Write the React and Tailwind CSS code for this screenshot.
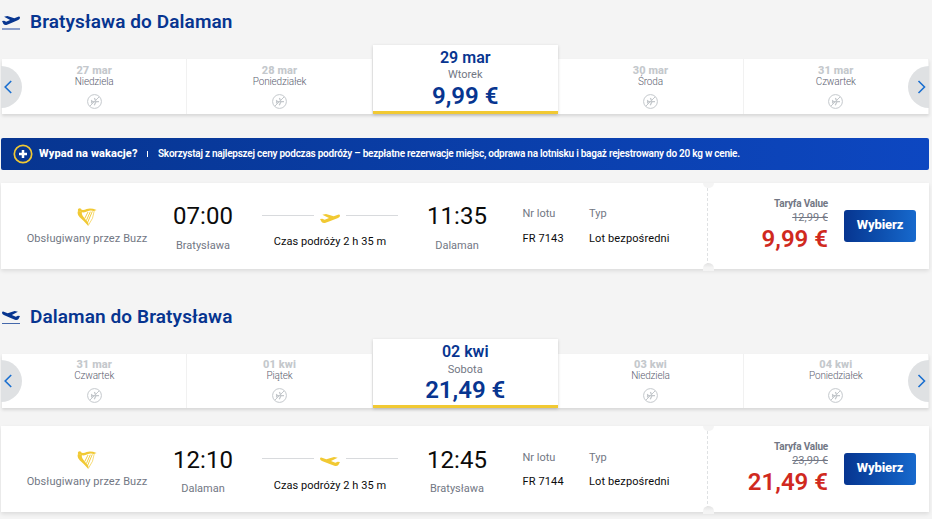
import classNames from "clsx";

const flights = [
	{
		direction: "takeoff",
		title: "Bratysława do Dalaman",
		days: [
			{ date: "27 mar", day: "Niedziela" },
			{ date: "28 mar", day: "Poniedziałek" },
			{ date: "29 mar", day: "Wtorek", price: "9,99 €" },
			{ date: "30 mar", day: "Środa" },
			{ date: "31 mar", day: "Czwartek" },
		],
		departure: { time: "07:00", city: "Bratysława" },
		arrival: { time: "11:35", city: "Dalaman" },
		number: "FR 7143",
		oldPrice: "12,99 €",
		price: "9,99 €",
	},
	{
		direction: "landing",
		title: "Dalaman do Bratysława",
		days: [
			{ date: "31 mar", day: "Czwartek" },
			{ date: "01 kwi", day: "Piątek" },
			{ date: "02 kwi", day: "Sobota", price: "21,49 €" },
			{ date: "03 kwi", day: "Niedziela" },
			{ date: "04 kwi", day: "Poniedziałek" },
		],
		departure: { time: "12:10", city: "Dalaman" },
		arrival: { time: "12:45", city: "Bratysława" },
		number: "FR 7144",
		oldPrice: "23,99 €",
		price: "21,49 €",
	},
];

function Plane({ direction, className }) {
	return (
		<svg
			viewBox="0 0 60 27"
			preserveAspectRatio="none"
			fill="currentColor"
			className={classNames(className, direction === "landing" && "-scale-x-100")}
		>
			<path d="M0 15 L7 14 L14 17 L27 12 L7 2 L18 0 L41 7 L54 2 Q60 1 60 5 Q60 9 54 12 L31 21 L17 26 Q9 28 5 24 Z" />
		</svg>
	);
}

function Harp() {
	return (
		<svg viewBox="0 0 60 54" className="w-5 h-[18px] text-[#f1c933]" fill="none" stroke="currentColor">
			<circle cx="8" cy="6" r="5.5" fill="currentColor" stroke="none" />
			<path d="M3 9 Q-1 19 8 28 Q20 38 34 54 L34 44 Q23 32 17 23 Q13 17 15 11 Z" fill="currentColor" stroke="none" />
			<path d="M9 4 Q19 9 29 3 Q41 -1 59 6 L50 9 Q40 6 32 10 Q22 15 11 12 Z" fill="currentColor" stroke="none" />
			<path d="M52 7 Q50 32 34 52" strokeWidth="2" />
			<path d="M33 12 L23 32 M40 11 L28 38 M46 10 L32 43" strokeWidth="2.8" />
		</svg>
	);
}

function NoFlight() {
	return (
		<svg viewBox="0 0 15 15" className="size-[15px] text-[#c4c8cc]" fill="none" stroke="currentColor">
			<circle cx="7.5" cy="7.5" r="6.9" strokeWidth="1" />
			<path d="M2.8 12.2 L12.2 2.8" strokeWidth="1" />
			<path d="M4 7.7 H12 M4.3 6 L5.3 7.7 L4.3 9.4 M7.4 4.1 L9 7.7 L7.2 11.3" strokeWidth="1.3" />
		</svg>
	);
}

function Arrow({ side }) {
	const isLeft = side === "left";
	return (
		<button
			className={classNames(
				"absolute bottom-[6px] h-[42px] w-[21px] bg-[#dfe1e3] flex items-center z-10",
				isLeft ? "-left-px rounded-r-full pl-[3px]" : "right-0 rounded-l-full pl-[9px]"
			)}
		>
			<svg viewBox="0 0 9 14" className="w-[9px] h-[14px]" fill="none" stroke="#1a6fd0" strokeWidth="1.6">
				<path d={isLeft ? "M7.2 1 L1.2 7 L7.2 13" : "M1.5 1 L7.5 7 L1.5 13"} />
			</svg>
		</button>
	);
}

function Day({ date, day, price }) {
	if (price) {
		return (
			<div className="w-[185.1px] mr-[0.5px] self-end h-[69px] z-10 flex flex-col items-center bg-white border-b-3 border-[#f1c933] shadow-[0_1px_3px_rgba(0,0,0,0.18)]">
				<div className="mt-[3px] mb-[0.3px] text-base leading-5 font-semibold text-[#073590]">{date}</div>
				<div className="mb-[-0.3px] text-[11px] leading-[14px] text-[#727784]">{day}</div>
				<div className="text-2xl leading-[29px] font-semibold text-[#073590]">{price}</div>
			</div>
		);
	}
	return (
		<div className="w-[185.35px] flex flex-col items-center justify-end pb-[5px] border-r border-[#f1f1f1] last:border-r-0">
			<div className="text-[11px] leading-3 tracking-[0.1px] font-extrabold text-[#c4c8cc]">{date}</div>
			<div className="-mt-px mb-[6px] text-[10px] leading-3 tracking-[-0.15px] font-light text-[#5b6070]">{day}</div>
			<NoFlight />
		</div>
	);
}

function Carousel({ days, className }) {
	return (
		<div className={classNames("relative ml-[2px] w-[927px] flex bg-white shadow-[0_2px_3px_rgba(0,0,0,0.12)]", className)}>
			<Arrow side="left" />
			{days.map((d) => (
				<Day key={d.date} {...d} />
			))}
			<Arrow side="right" />
		</div>
	);
}

function Banner() {
	return (
		<div className="mt-6 ml-px w-[928px] h-8 flex items-center rounded-xs bg-linear-to-r from-[#073590] to-[#0d47c1] text-white">
			<svg viewBox="0 0 20 20" className="ml-3 size-5" fill="none">
				<circle cx="10" cy="10" r="8.7" stroke="#f1c933" strokeWidth="1.7" />
				<path d="M10 6 V14 M6 10 H14" stroke="#fff" strokeWidth="2.5" />
			</svg>
			<span className="ml-[6px] w-[99px] text-[11px] tracking-[0.1px] font-extrabold whitespace-nowrap">Wypad na wakacje?</span>
			<span className="ml-[9px] w-px h-[6px] bg-white" />
			<span className="ml-[10px] pb-px text-[10px] tracking-[-0.24px] font-semibold whitespace-nowrap">
				Skorzystaj z najlepszej ceny podczas podróży – bezpłatne rezerwacje miejsc, odprawa na lotnisku i bagaż rejestrowany do 20 kg w cenie.
			</span>
		</div>
	);
}

function Stop({ time, city }) {
	return (
		<div className="w-[60px] flex flex-col items-center">
			<div className="mt-[19.3px] text-2xl leading-7 text-[#0b0b0b]">{time}</div>
			<div className="mt-[8.7px] text-[11px] leading-[14px] text-[#727784]">{city}</div>
		</div>
	);
}

function Detail({ label, value, className }) {
	return (
		<div className={classNames("pt-[24.3px] text-[11px] leading-[14px] whitespace-nowrap", className)}>
			<div className="text-[#727784]">{label}</div>
			<div className="mt-[10.7px] tracking-[0.13px] text-[#0b0b0b]">{value}</div>
		</div>
	);
}

function FlightCard({ flight, className }) {
	return (
		<div className={classNames("ml-px w-[928px] h-[86px] flex bg-white shadow-[0_2px_4px_rgba(0,0,0,0.1)]", className)}>
			<div className="w-[172px] pt-[25px] flex flex-col items-center">
				<Harp />
				<div className="mt-[6px] text-[11px] leading-[14px] tracking-[0.09px] text-[#727784] whitespace-nowrap">Obsługiwany przez Buzz</div>
			</div>
			<Stop {...flight.departure} />
			<div className="ml-7 w-[138px] pt-[31px] flex flex-col items-center">
				<div className="h-[10px] w-[136px] flex justify-between">
					<span className="mt-px w-[52px] h-px bg-[#d8dadd]" />
					<Plane direction={flight.direction} className="w-5 h-[9px] text-[#f1c933]" />
					<span className="mt-px w-[52px] h-px bg-[#d8dadd]" />
				</div>
				<div className="mt-[11.3px] text-[11px] leading-[14px] tracking-[0.05px] text-[#0b0b0b] whitespace-nowrap">Czas podróży 2 h 35 m</div>
			</div>
			<div className="ml-[28px]">
				<Stop {...flight.arrival} />
			</div>
			<Detail label="Nr lotu" value={flight.number} className="ml-[35.5px] w-[66.5px]" />
			<Detail label="Typ" value="Lot bezpośredni" className="w-[118px]" />
			<div className="relative w-[2px]">
				<div className="h-full w-px bg-[repeating-linear-gradient(to_bottom,#dfe1e3_0_3px,transparent_3px_5px)]" />
				<div className="absolute top-0 -left-[4px] w-[11px] h-[5px] rounded-b-full bg-[#f4f4f4]" />
				<div className="absolute -bottom-[2px] -left-[4px] w-[11px] h-2 rounded-t-full bg-linear-to-b from-[#e2e2e2] to-[#f4f4f4] to-60%" />
			</div>
			<div className="w-[119px] pt-[14px] text-right text-[#727784]">
				<div className="text-[10px] leading-[14px] tracking-[-0.2px] font-bold">Taryfa Value</div>
				<div className="text-[11px] leading-[13px] line-through">{flight.oldPrice}</div>
				<div className="text-2xl leading-[30px] font-semibold text-[#d0291e]">{flight.price}</div>
			</div>
			<button className="mt-[27px] pb-[2px] ml-4 w-[72px] h-8 rounded-[3px] bg-linear-to-r from-[#073590] to-[#1769cd] text-white text-[13px] leading-4 tracking-[-0.1px] font-extrabold">
				Wybierz
			</button>
		</div>
	);
}

function Heading({ flight, className }) {
	return (
		<div className={classNames("flex items-start ml-[2px] text-[#073590]", className)}>
			<div className="w-7 pt-[5px]">
				<Plane direction={flight.direction} className="w-[18px] h-[9px]" />
				<div
					className={classNames(
						"mt-[3px] w-[18px]",
						flight.direction === "landing" ? "h-px bg-[#4468ab]" : "h-[2px] bg-[#8a9ecb]"
					)}
				/>
			</div>
			<h2 className="pt-px text-[19px] leading-5 tracking-[0.1px] font-semibold">{flight.title}</h2>
		</div>
	);
}

export default function App() {
	return (
		<div className="h-[519px] overflow-hidden bg-[#f4f4f4] font-['Roboto',sans-serif]">
			<Heading flight={flights[0]} className="pt-[11px] h-[59px]" />
			<Carousel days={flights[0].days} className="h-[55px]" />
			<Banner />
			<FlightCard flight={flights[0]} className="mt-[13px]" />
			<Heading flight={flights[1]} className="mt-[37px] h-[48.2px]" />
			<Carousel days={flights[1].days} className="h-[54.1px]" />
			<FlightCard flight={flights[1]} className="mt-[18px]" />
		</div>
	);
}
